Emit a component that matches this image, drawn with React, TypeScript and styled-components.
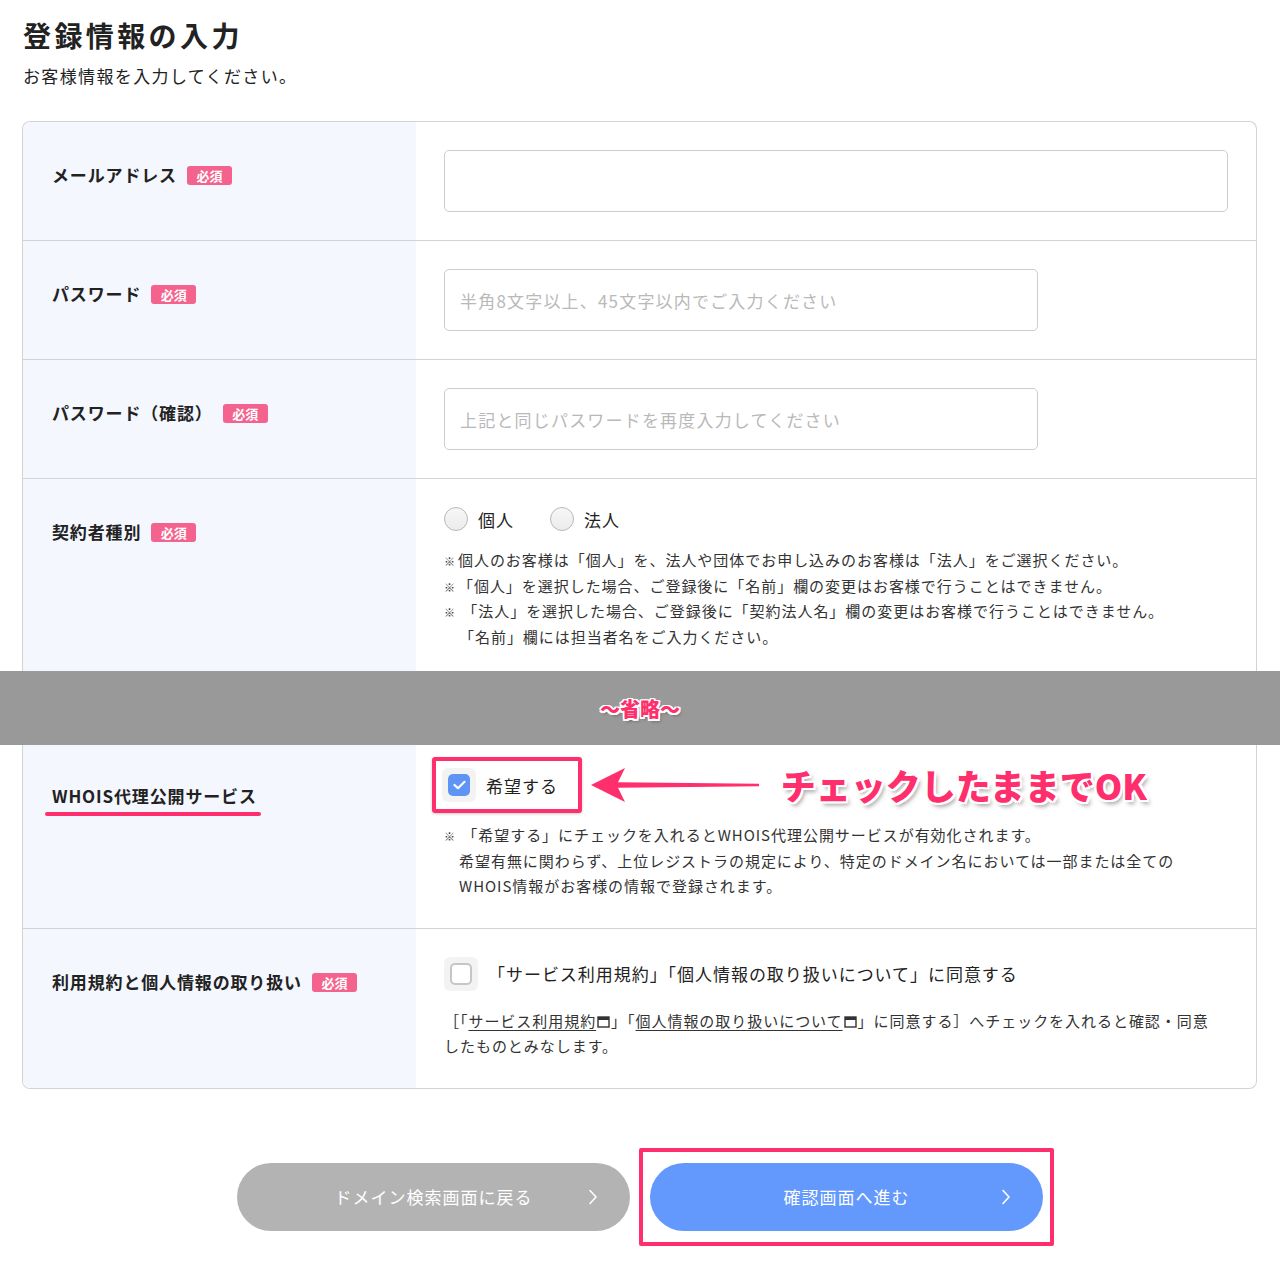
import * as React from 'react';
import styled, { createGlobalStyle } from 'styled-components';

const pink = '#ff2e6c';
const badgePink = '#f4638e';
const line = '#d3d3d3';
const labelBg = '#f4f7fe';

const GlobalStyle = createGlobalStyle`
  body {
    margin: 0;
    background: #fff;
    color: #222;
    font-family: "Noto Sans CJK JP", "Noto Sans", sans-serif;
    letter-spacing: 0.06em;
  }
`;

const Page = styled.div`
  width: 1280px;
  box-sizing: border-box;
  padding: 15px 23px 36px 22px;
`;

const Title = styled.h1`
  margin: 0 0 0 1px;
  font-size: 28px;
  line-height: 40px;
  font-weight: 700;
  letter-spacing: 3.4px;
`;

const Lead = styled.p`
  margin: 9px 0 0 1px;
  font-size: 17px;
  line-height: 24px;
  letter-spacing: 0.08em;
`;

interface cp {
  $part: 'top' | 'bottom'
}
const Card = styled.div<cp>`
  border: 1px solid ${line};
  ${(p) => p.$part === 'top'
    ? 'border-bottom: none; border-radius: 8px 8px 0 0; margin-top: 33px;'
    : 'border-top: none; border-radius: 0 0 8px 8px;'}
  overflow: hidden;
`;

interface rp {
  $last?: boolean
}
const Row = styled.div<rp>`
  display: grid;
  grid-template-columns: 393px 1fr;
  border-bottom: ${(p) => p.$last ? 'none' : `1px solid ${line}`};
`;

interface lp {
  $top?: number
}
const LabelCell = styled.div<lp>`
  background: ${labelBg};
  padding: ${(p) => p.$top ?? 42}px 0 0 29px;
  display: flex;
  align-items: flex-start;
  gap: 10px;
`;

const Label = styled.span`
  font-size: 17px;
  line-height: 22px;
  font-weight: 700;
  letter-spacing: 0.05em;
`;

const Underlined = styled(Label)`
  position: relative;
  &::after {
    content: '';
    position: absolute;
    left: -7px;
    right: -4px;
    bottom: -9px;
    height: 4px;
    border-radius: 2px;
    background: ${pink};
  }
`;

const Badge = styled.span`
  margin-top: 2px;
  width: 45px;
  height: 19px;
  border-radius: 3px;
  background: ${badgePink};
  color: #fff;
  font-size: 13px;
  font-weight: 700;
  line-height: 19px;
  text-align: center;
  letter-spacing: 0;
`;

interface fp {
  $top?: number
  $bottom?: number
}
const FieldCell = styled.div<fp>`
  padding: ${(p) => p.$top ?? 28}px 28px ${(p) => p.$bottom ?? 28}px 28px;
`;

interface ip {
  $width?: number
}
const Input = styled.input<ip>`
  display: block;
  box-sizing: border-box;
  width: ${(p) => p.$width ? `${p.$width}px` : '100%'};
  height: 62px;
  border: 1px solid #cdcdcd;
  border-radius: 5px;
  padding: 0 15px;
  font-family: inherit;
  font-size: 17px;
  letter-spacing: 0.07em;
  color: #222;
  outline: none;
  &::placeholder {
    color: #b9b9b9;
  }
`;

const Choices = styled.div`
  display: flex;
  align-items: center;
  gap: 36px;
  height: 24px;
`;

const Choice = styled.label`
  display: flex;
  align-items: center;
  gap: 10px;
  font-size: 17px;
`;

const Radio = styled.span`
  width: 24px;
  height: 24px;
  box-sizing: border-box;
  border-radius: 50%;
  border: 1px solid #b8b8b8;
  background: linear-gradient(#f7f7f7, #ececec);
`;

interface np {
  $top?: number
}
const Notes = styled.div<np>`
  margin-top: ${(p) => p.$top ?? 16}px;
  font-size: 15px;
  line-height: 25.5px;
  color: #333;
`;

const Hang = styled.div`
  padding-left: 1em;
  text-indent: -1em;
`;

const Mark = styled.span`
  font-size: 11px;
  line-height: 0;
  margin-right: 2px;
`;

const CheckLine = styled.div`
  display: flex;
  align-items: center;
  gap: 10px;
  font-size: 17px;
`;

const CheckWell = styled.span`
  width: 34px;
  height: 34px;
  border-radius: 6px;
  background: #f3f3f3;
  display: flex;
  align-items: center;
  justify-content: center;
  flex: none;
`;

interface bp {
  $checked?: boolean
}
const CheckBox = styled.span<bp>`
  width: 22px;
  height: 22px;
  box-sizing: border-box;
  border-radius: 5px;
  background: ${(p) => p.$checked ? '#5f94f5' : '#fff'};
  border: ${(p) => p.$checked ? 'none' : '2px solid #c6c6c6'};
  display: flex;
  align-items: center;
  justify-content: center;
`;

const Annotated = styled.div`
  display: flex;
  align-items: center;
`;

const PinkBox = styled.div`
  margin-left: -12px;
  border: 4px solid ${pink};
  border-radius: 3px;
  padding: 7px 20px 7px 6px;
  box-shadow: 0 1px 3px rgba(0, 0, 0, 0.2);
`;

const Arrow = styled.svg`
  margin-left: 9px;
  width: 170px;
  height: 36px;
  flex: none;
`;

const Callout = styled.span`
  margin-left: 20px;
  font-size: 35px;
  line-height: 40px;
  font-weight: 900;
  letter-spacing: 0;
  color: ${pink};
  text-shadow:
    2px 0 #fff, -2px 0 #fff, 0 2px #fff, 0 -2px #fff,
    2px 2px #fff, -2px -2px #fff, 2px -2px #fff, -2px 2px #fff,
    3px 4px 4px rgba(0, 0, 0, 0.35);
`;

const Omit = styled.div`
  margin: 0 -23px 0 -22px;
  height: 74px;
  background: #999;
  display: flex;
  align-items: center;
  justify-content: center;
`;

const OmitText = styled.span`
  font-size: 20px;
  font-weight: 900;
  letter-spacing: 0;
  color: ${pink};
  text-shadow:
    1.5px 0 #fff, -1.5px 0 #fff, 0 1.5px #fff, 0 -1.5px #fff,
    1.5px 1.5px #fff, -1.5px -1.5px #fff, 1.5px -1.5px #fff, -1.5px 1.5px #fff,
    2px 3px 3px rgba(0, 0, 0, 0.3);
`;

const Link = styled.a`
  color: #333;
  text-decoration: underline;
  text-underline-offset: 3px;
`;

const Buttons = styled.div`
  margin-top: 74px;
  display: flex;
  justify-content: center;
  gap: 20px;
  padding-left: 1px;
`;

interface btp {
  $primary?: boolean
}
const Button = styled.button<btp>`
  position: relative;
  width: 393px;
  height: 68px;
  border: none;
  border-radius: 34px;
  background: ${(p) => p.$primary ? '#6399fd' : '#b3b3b3'};
  color: #fff;
  font-family: inherit;
  font-size: 17px;
  letter-spacing: 0.06em;
  display: flex;
  align-items: center;
  justify-content: center;
`;

const Chevron = styled.svg`
  position: absolute;
  right: 32px;
  top: 26px;
  width: 10px;
  height: 16px;
`;

const Frame = styled.div`
  margin: -15px -11px;
  padding: 11px 7px;
  border: 4px solid ${pink};
  border-radius: 2px;
`;

function Required() {
  return <Badge>必須</Badge>;
}

function Tick() {
  return (
    <svg width="13" height="10" viewBox="0 0 13 10">
      <polyline points="1.5,5 5,8.2 11.5,1.8" fill="none" stroke="#fff" strokeWidth="2.2" strokeLinecap="round" strokeLinejoin="round" />
    </svg>
  );
}

function External() {
  return (
    <svg width="13" height="12" viewBox="0 0 13 12" style={{ margin: '0 1px', verticalAlign: '-1px' }}>
      <rect x="1" y="1" width="11" height="10" fill="none" stroke="#333" strokeWidth="1.4" />
      <rect x="1" y="1" width="11" height="3" fill="#333" />
    </svg>
  );
}

function Next() {
  return (
    <Chevron viewBox="0 0 10 16">
      <polyline points="2,1.5 8,8 2,14.5" fill="none" stroke="#fff" strokeWidth="1.6" strokeLinecap="round" strokeLinejoin="round" />
    </Chevron>
  );
}

export default function App() {
  return (
    <Page>
      <GlobalStyle />
      <Title>登録情報の入力</Title>
      <Lead>お客様情報を入力してください。</Lead>

      <Card $part="top">
        <Row>
          <LabelCell><Label>メールアドレス</Label><Required /></LabelCell>
          <FieldCell><Input /></FieldCell>
        </Row>
        <Row>
          <LabelCell><Label>パスワード</Label><Required /></LabelCell>
          <FieldCell><Input $width={594} placeholder="半角8文字以上、45文字以内でご入力ください" /></FieldCell>
        </Row>
        <Row>
          <LabelCell><Label>パスワード（確認）</Label><Required /></LabelCell>
          <FieldCell><Input $width={594} placeholder="上記と同じパスワードを再度入力してください" /></FieldCell>
        </Row>
        <Row $last>
          <LabelCell><Label>契約者種別</Label><Required /></LabelCell>
          <FieldCell $bottom={22}>
            <Choices>
              <Choice><Radio />個人</Choice>
              <Choice><Radio />法人</Choice>
            </Choices>
            <Notes>
              <div><Mark>※</Mark>個人のお客様は「個人」を、法人や団体でお申し込みのお客様は「法人」をご選択ください。</div>
              <div><Mark>※</Mark>「個人」を選択した場合、ご登録後に「名前」欄の変更はお客様で行うことはできません。</div>
              <Hang><Mark>※</Mark> 「法人」を選択した場合、ご登録後に「契約法人名」欄の変更はお客様で行うことはできません。<br />「名前」欄には担当者名をご入力ください。</Hang>
            </Notes>
          </FieldCell>
        </Row>
      </Card>

      <Omit><OmitText>〜省略〜</OmitText></Omit>

      <Card $part="bottom">
        <Row>
          <LabelCell $top={40}><Underlined>WHOIS代理公開サービス</Underlined></LabelCell>
          <FieldCell $top={12} $bottom={29}>
            <Annotated>
              <PinkBox>
                <CheckLine>
                  <CheckWell><CheckBox $checked><Tick /></CheckBox></CheckWell>
                  希望する
                </CheckLine>
              </PinkBox>
              <Arrow viewBox="0 0 170 36">
                <path d="M0,18 L34,1 L27,15.2 L168,16.8 L168,19.2 L27,20.8 L34,35 Z" fill={pink} />
              </Arrow>
              <Callout>チェックしたままでOK</Callout>
            </Annotated>
            <Notes $top={9}>
              <Hang><Mark>※</Mark> 「希望する」にチェックを入れるとWHOIS代理公開サービスが有効化されます。<br />希望有無に関わらず、上位レジストラの規定により、特定のドメイン名においては一部または全ての<br />WHOIS情報がお客様の情報で登録されます。</Hang>
            </Notes>
          </FieldCell>
        </Row>
        <Row $last>
          <LabelCell><Label>利用規約と個人情報の取り扱い</Label><Required /></LabelCell>
          <FieldCell $bottom={29}>
            <CheckLine>
              <CheckWell><CheckBox /></CheckWell>
              「サービス利用規約」「個人情報の取り扱いについて」に同意する
            </CheckLine>
            <Notes $top={17}>
              ［「<Link>サービス利用規約</Link><External />」「<Link>個人情報の取り扱いについて</Link><External />」に同意する］へチェックを入れると確認・同意<br />したものとみなします。
            </Notes>
          </FieldCell>
        </Row>
      </Card>

      <Buttons>
        <Button>ドメイン検索画面に戻る<Next /></Button>
        <Frame>
          <Button $primary>確認画面へ進む<Next /></Button>
        </Frame>
      </Buttons>
    </Page>
  );
}
